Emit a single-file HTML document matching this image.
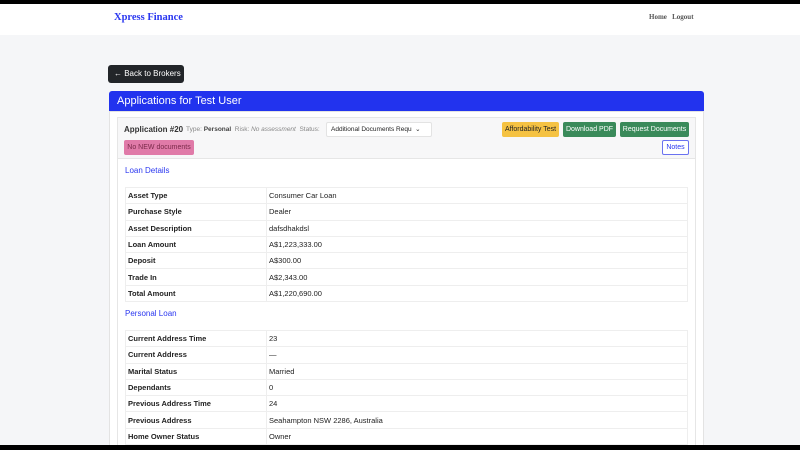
<!DOCTYPE html><html><head><style>
*{box-sizing:border-box;margin:0;padding:0}
html,body{width:800px;height:450px;overflow:hidden}
body{background:#f5f6f8;font-family:"Liberation Sans",sans-serif;position:relative}
.bar{position:absolute;left:0;width:800px;background:#000;z-index:5}
.nav{position:absolute;top:4px;left:0;width:800px;height:31px;background:#fff}
.brand{position:absolute;left:114px;top:8px;font:bold 10.5px "Liberation Serif",serif;color:#2a37f0}
.links{position:absolute;left:649px;top:9px;font:bold 7px "Liberation Serif",serif;color:#555}
.back{position:absolute;left:108px;top:65px;width:76px;height:18px;background:#222529;border-radius:3px;color:#fff;font-size:8px;line-height:18px;padding-left:6px;white-space:nowrap}
.hdr{position:absolute;left:109px;top:91px;width:595px;height:20px;background:#2233ee;border-radius:3px 3px 0 0;color:#fff;font-size:11px;line-height:20px;padding-left:8px}
.card{position:absolute;left:109px;top:111px;width:595px;height:340px;background:#fff;border:1px solid #e3e3e3}
.inner{position:absolute;left:117px;top:117px;width:579px;height:340px;border:1px solid #e6e6e6;background:#fff}
.ih{position:absolute;left:0;top:0;width:577px;height:41px;background:#f7f7f8;border-bottom:1px solid #e6e6e6}
.t{position:absolute;font-size:6.5px;color:#888;white-space:nowrap}
.btn{position:absolute;top:4px;height:15px;border-radius:2px;font-size:7px;line-height:15px;text-align:center;white-space:nowrap}
.sec{position:absolute;left:7px;font-size:8px;color:#2a37f0}
table{position:absolute;left:7px;width:563px;border-collapse:collapse;font-size:7.5px;color:#222;border:1px solid #eee}
td{height:16.3px;padding-left:2px;border-top:1px solid #eee}
td:first-child{width:141px;font-weight:bold;border-right:1px solid #eee}
</style></head><body>
<div class="nav"><div class="brand">Xpress Finance</div><div class="links">Home&nbsp;&nbsp;&nbsp;Logout</div></div>
<div class="back">← Back to Brokers</div>
<div class="hdr">Applications for Test User</div>
<div class="card"></div>
<div class="inner">
<div class="ih">
<div class="t" style="left:6px;top:7px;font-size:8px;font-weight:bold;color:#333">Application #20</div>
<div class="t" style="left:68px;top:8px">Type: <b style="color:#444">Personal</b>&nbsp; Risk: <i>No assessment</i>&nbsp; Status:</div>
<div class="t" style="left:208px;top:4px;width:106px;height:15px;background:#fff;border:1px solid #e3e3e3;border-radius:2px;color:#222;line-height:13px;padding-left:4px;overflow:hidden">Additional Documents Requ&nbsp;&nbsp;⌄</div>
<div class="btn" style="left:384px;width:57px;background:#f5c242;color:#222">Affordability Test</div>
<div class="btn" style="left:445px;width:53px;background:#3a8a5a;color:#fff">Download PDF</div>
<div class="btn" style="left:502px;width:69px;background:#3a8a5a;color:#fff">Request Documents</div>
<div class="btn" style="left:6px;top:22px;width:70px;background:#e07aa8;color:#7a2a4a">No NEW documents</div>
<div class="btn" style="left:544px;top:22px;width:27px;background:#fff;border:1px solid #6a72f0;color:#2a37f0;line-height:13px">Notes</div>
</div>
<div class="sec" style="top:48px">Loan Details</div>
<table style="top:69px">
<tr><td>Asset Type</td><td>Consumer Car Loan</td></tr>
<tr><td>Purchase Style</td><td>Dealer</td></tr>
<tr><td>Asset Description</td><td>dafsdhakdsl</td></tr>
<tr><td>Loan Amount</td><td>A$1,223,333.00</td></tr>
<tr><td>Deposit</td><td>A$300.00</td></tr>
<tr><td>Trade In</td><td>A$2,343.00</td></tr>
<tr><td>Total Amount</td><td>A$1,220,690.00</td></tr>
</table>
<div class="sec" style="top:191px">Personal Loan</div>
<table style="top:212px">
<tr><td>Current Address Time</td><td>23</td></tr>
<tr><td>Current Address</td><td>—</td></tr>
<tr><td>Marital Status</td><td>Married</td></tr>
<tr><td>Dependants</td><td>0</td></tr>
<tr><td>Previous Address Time</td><td>24</td></tr>
<tr><td>Previous Address</td><td>Seahampton NSW 2286, Australia</td></tr>
<tr><td>Home Owner Status</td><td>Owner</td></tr>
</table>
</div>
<div class="bar" style="top:0;height:4px"></div>
<div class="bar" style="top:445px;height:5px"></div>
</body></html>
